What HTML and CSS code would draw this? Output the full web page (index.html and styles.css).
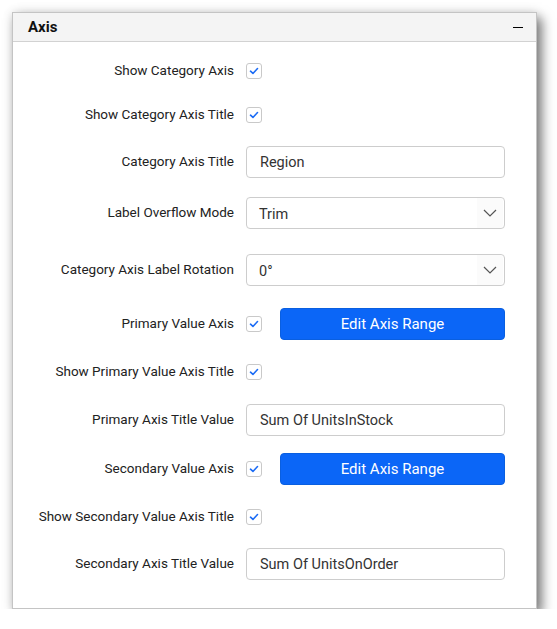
FILE: index.html
```html
<!DOCTYPE html>
<html>
<head>
<meta charset="utf-8">
<link rel="stylesheet" href="styles.css">
</head>
<body>
<div class="panel">
  <div class="header">
    <span class="title">Axis</span>
    <span class="minus"></span>
  </div>
  <div class="content">
    <div class="row r1">
      <label class="lbl">Show Category Axis</label>
      <div class="ctl"><span class="cb"><svg viewBox="0 0 16 16" width="16" height="16"><path d="M4 8.2 L6.8 10.8 L12 5.2" fill="none" stroke="#1b6bf5" stroke-width="1.8" stroke-linecap="round" stroke-linejoin="round"/></svg></span></div>
    </div>
    <div class="row r2">
      <label class="lbl">Show Category Axis Title</label>
      <div class="ctl"><span class="cb"><svg viewBox="0 0 16 16" width="16" height="16"><path d="M4 8.2 L6.8 10.8 L12 5.2" fill="none" stroke="#1b6bf5" stroke-width="1.8" stroke-linecap="round" stroke-linejoin="round"/></svg></span></div>
    </div>
    <div class="row r3">
      <label class="lbl">Category Axis Title</label>
      <div class="ctl"><div class="input">Region</div></div>
    </div>
    <div class="row r4">
      <label class="lbl">Label Overflow Mode</label>
      <div class="ctl"><div class="input select"><span class="val">Trim</span><span class="arrow"><svg viewBox="0 0 14 8" width="14" height="8"><path d="M1 1 L7 7 L13 1" fill="none" stroke="#555" stroke-width="1.2"/></svg></span></div></div>
    </div>
    <div class="row r5">
      <label class="lbl">Category Axis Label Rotation</label>
      <div class="ctl"><div class="input select"><span class="val">0°</span><span class="arrow"><svg viewBox="0 0 14 8" width="14" height="8"><path d="M1 1 L7 7 L13 1" fill="none" stroke="#555" stroke-width="1.2"/></svg></span></div></div>
    </div>
    <div class="row r6">
      <label class="lbl">Primary Value Axis</label>
      <div class="ctl"><span class="cb"><svg viewBox="0 0 16 16" width="16" height="16"><path d="M4 8.2 L6.8 10.8 L12 5.2" fill="none" stroke="#1b6bf5" stroke-width="1.8" stroke-linecap="round" stroke-linejoin="round"/></svg></span><button class="btn">Edit Axis Range</button></div>
    </div>
    <div class="row r7">
      <label class="lbl">Show Primary Value Axis Title</label>
      <div class="ctl"><span class="cb"><svg viewBox="0 0 16 16" width="16" height="16"><path d="M4 8.2 L6.8 10.8 L12 5.2" fill="none" stroke="#1b6bf5" stroke-width="1.8" stroke-linecap="round" stroke-linejoin="round"/></svg></span></div>
    </div>
    <div class="row r8">
      <label class="lbl">Primary Axis Title Value</label>
      <div class="ctl"><div class="input">Sum Of UnitsInStock</div></div>
    </div>
    <div class="row r9">
      <label class="lbl">Secondary Value Axis</label>
      <div class="ctl"><span class="cb"><svg viewBox="0 0 16 16" width="16" height="16"><path d="M4 8.2 L6.8 10.8 L12 5.2" fill="none" stroke="#1b6bf5" stroke-width="1.8" stroke-linecap="round" stroke-linejoin="round"/></svg></span><button class="btn">Edit Axis Range</button></div>
    </div>
    <div class="row r10">
      <label class="lbl">Show Secondary Value Axis Title</label>
      <div class="ctl"><span class="cb"><svg viewBox="0 0 16 16" width="16" height="16"><path d="M4 8.2 L6.8 10.8 L12 5.2" fill="none" stroke="#1b6bf5" stroke-width="1.8" stroke-linecap="round" stroke-linejoin="round"/></svg></span></div>
    </div>
    <div class="row r11">
      <label class="lbl">Secondary Axis Title Value</label>
      <div class="ctl"><div class="input">Sum Of UnitsOnOrder</div></div>
    </div>
  </div>
</div>
</body>
</html>
```

FILE: styles.css
```css
html, body {
  margin: 0;
  padding: 0;
  background: #ffffff;
}
body {
  padding: 12px 0 0 12px;
  font-family: Roboto, "Liberation Sans", sans-serif;
}
.panel {
  width: 523px;
  height: 595px;
  border: 1px solid #c4c4c4;
  background: #fff;
  box-shadow: 5px 6px 11px rgba(0, 0, 0, 0.5), 0 0 10px rgba(0, 0, 0, 0.12);
}
.header {
  height: 28px;
  background: #f4f4f4;
  border-bottom: 1px solid #d2d2d2;
  display: flex;
  align-items: center;
  justify-content: space-between;
  padding: 0 13px 0 15px;
}
.title {
  font-size: 15px;
  font-weight: 700;
  color: #111;
}
.minus {
  width: 10px;
  height: 1.5px;
  background: #000;
  margin-top: 1px;
}
.content {
  display: flex;
  flex-direction: column;
  padding-top: 13px;
}
.row {
  height: 32px;
  display: flex;
  align-items: center;
}
.r2 { margin-top: 12px; }
.r3 { margin-top: 15px; }
.r4 { margin-top: 19px; }
.r5 { margin-top: 25px; }
.r6 { margin-top: 22px; }
.r7 { margin-top: 16px; }
.r8 { margin-top: 16px; }
.r9 { margin-top: 17px; }
.r10 { margin-top: 16px; }
.r11 { margin-top: 15px; }
.lbl {
  text-align: right;
  font-size: 13.5px;
  color: #222;
  padding-right: 12px;
  box-sizing: border-box;
  width: 233px;
  margin-top: -2px;
  white-space: nowrap;
}
.ctl {
  display: flex;
  align-items: center;
  width: 259px;
}
.cb {
  width: 14px;
  height: 14px;
  border: 1px solid #c9c9c9;
  border-radius: 3px;
  display: flex;
  align-items: center;
  justify-content: center;
  background: #fff;
}
.cb svg {
  width: 14px;
  height: 14px;
}
.input {
  box-sizing: border-box;
  width: 259px;
  height: 32px;
  border: 1px solid #cdcdcd;
  border-radius: 4px;
  padding: 0 13px;
  display: flex;
  align-items: center;
  font-size: 14.5px;
  color: #333;
}
.select {
  justify-content: space-between;
  padding: 0 0 0 12px;
}
.val {
  margin-top: 2px;
}
.arrow {
  width: 26px;
  height: 30px;
  display: flex;
  align-items: center;
  justify-content: center;
  background: #fbfbfb;
  border-radius: 0 4px 4px 0;
  margin-right: 1px;
}
.btn {
  margin-left: 18px;
  width: 225px;
  height: 32px;
  border: 1px solid #0a5fe0;
  border-radius: 4px;
  background: #0b66f7;
  color: #fff;
  font-family: Roboto, "Liberation Sans", sans-serif;
  font-size: 15px;
  font-weight: 400;
  padding: 0;
}
```
